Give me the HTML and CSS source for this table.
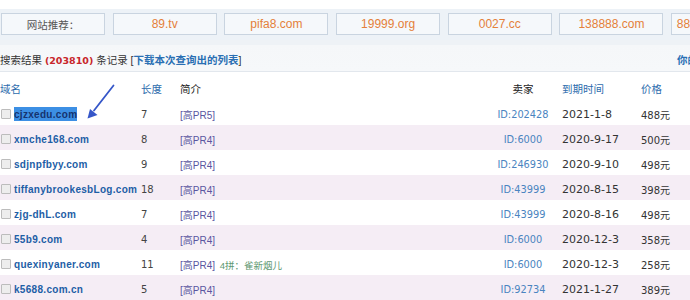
FILE: index.html
```html
<!DOCTYPE html>
<html lang="zh">
<head>
<meta charset="utf-8">
<title>域名搜索结果</title>
<link rel="stylesheet" href="styles.css">
</head>
<body>
<div class="page">
  <div class="rec">
    <div class="box label">网站推荐：</div>
    <div class="box">89.tv</div>
    <div class="box">pifa8.com</div>
    <div class="box">19999.org</div>
    <div class="box">0027.cc</div>
    <div class="box">138888.com</div>
    <div class="box">8888888888.com</div>
  </div>
  <div class="search">
    <div class="left">搜索结果 <b class="count">(203810)</b> 条记录 [<a class="dl">下载本次查询出的列表</a>]</div>
    <div class="right">你的</div>
  </div>
  <div class="table">
    <div class="row head">
      <div class="c-dom blue">域名</div>
      <div class="blue">长度</div>
      <div class="dark">简介</div>
      <div class="c-seller dark">卖家</div>
      <div class="blue">到期时间</div>
      <div class="blue">价格</div>
    </div>
    <div class="row">
      <div class="c-dom"><span class="cb"></span><a class="dom sel">cjzxedu.com</a></div>
      <div class="num">7</div>
      <div class="intro">[高PR5]</div>
      <div class="c-seller">ID:202428</div>
      <div class="date">2021-1-8</div>
      <div class="price">488元</div>
    </div>
    <div class="row alt">
      <div class="c-dom"><span class="cb"></span><a class="dom">xmche168.com</a></div>
      <div class="num">8</div>
      <div class="intro">[高PR4]</div>
      <div class="c-seller">ID:6000</div>
      <div class="date">2020-9-17</div>
      <div class="price">500元</div>
    </div>
    <div class="row">
      <div class="c-dom"><span class="cb"></span><a class="dom">sdjnpfbyy.com</a></div>
      <div class="num">9</div>
      <div class="intro">[高PR4]</div>
      <div class="c-seller">ID:246930</div>
      <div class="date">2020-9-10</div>
      <div class="price">498元</div>
    </div>
    <div class="row alt">
      <div class="c-dom"><span class="cb"></span><a class="dom">tiffanybrookesbLog.com</a></div>
      <div class="num">18</div>
      <div class="intro">[高PR4]</div>
      <div class="c-seller">ID:43999</div>
      <div class="date">2020-8-15</div>
      <div class="price">398元</div>
    </div>
    <div class="row">
      <div class="c-dom"><span class="cb"></span><a class="dom">zjg-dhL.com</a></div>
      <div class="num">7</div>
      <div class="intro">[高PR4]</div>
      <div class="c-seller">ID:43999</div>
      <div class="date">2020-8-16</div>
      <div class="price">498元</div>
    </div>
    <div class="row alt">
      <div class="c-dom"><span class="cb"></span><a class="dom">55b9.com</a></div>
      <div class="num">4</div>
      <div class="intro">[高PR4]</div>
      <div class="c-seller">ID:6000</div>
      <div class="date">2020-12-3</div>
      <div class="price">358元</div>
    </div>
    <div class="row">
      <div class="c-dom"><span class="cb"></span><a class="dom">quexinyaner.com</a></div>
      <div class="num">11</div>
      <div class="intro">[高PR4] <span class="note">4拼：雀新烟儿</span></div>
      <div class="c-seller">ID:6000</div>
      <div class="date">2020-12-3</div>
      <div class="price">258元</div>
    </div>
    <div class="row alt">
      <div class="c-dom"><span class="cb"></span><a class="dom">k5688.com.cn</a></div>
      <div class="num">5</div>
      <div class="intro">[高PR4]</div>
      <div class="c-seller">ID:92734</div>
      <div class="date">2021-1-27</div>
      <div class="price">389元</div>
    </div>
  </div>
  <svg class="arrow" width="40" height="40" viewBox="80 72 40 40" aria-hidden="true">
    <path d="M113.5 76.5 L94 101.5" stroke="#3556c8" stroke-width="1.8" fill="none" stroke-linecap="round"/>
    <path d="M87.5 109.5 L90 100 L97.5 106 Z" fill="#3556c8"/>
  </svg>
</div>
</body>
</html>
```

FILE: styles.css
```css
html, body {
  margin: 0;
  padding: 0;
  background: #ffffff;
}
body {
  width: 690px;
  height: 300px;
  overflow: hidden;
  font-family: "Liberation Sans", "Noto Sans CJK SC", sans-serif;
  font-size: 10px;
  color: #333333;
}
.page {
  position: relative;
  width: 690px;
}
.rec {
  margin-top: 9px;
  height: 31px;
  padding: 4px 0 0 1px;
  box-sizing: border-box;
  background: #edf2f7;
  display: flex;
  gap: 7.7px;
  white-space: nowrap;
  overflow: hidden;
}
.box {
  flex: 0 0 104px;
  height: 22px;
  box-sizing: border-box;
  border: 1px solid #c9d4e0;
  background: #f5f8fb;
  color: #e4803a;
  font-size: 12px;
  display: flex;
  align-items: center;
  justify-content: center;
  overflow: visible;
}
.box.label {
  color: #555555;
  font-size: 10.5px;
}
.search {
  height: 32px;
  background: linear-gradient(#eef2f6 0, #eef2f6 5px, #f5f7f9 5px, #f6f8fa 100%);
  border-bottom: 1px solid #e2e7ed;
  box-sizing: border-box;
  display: grid;
  grid-template-columns: 677px auto;
  align-items: center;
  padding-top: 8px;
  white-space: nowrap;
  font-size: 10.5px;
}
.count {
  color: #c8262b;
  font-family: "DejaVu Sans", sans-serif;
  font-size: 9.5px;
  font-weight: bold;
}
.dl, .right {
  color: #2a6fb3;
  font-weight: bold;
}
.row {
  display: grid;
  grid-template-columns: 141px 39px 304px 78px 79px 1fr;
  height: 25px;
  box-sizing: border-box;
  padding-top: 3px;
  align-items: center;
  white-space: nowrap;
}
.row.head {
  height: 28px;
  padding-top: 4px;
  font-size: 10.5px;
}
.row.alt {
  background: #f5edf5;
}
.blue { color: #2d6cad; }
.dark { color: #222222; }
.c-dom {
  display: flex;
  align-items: center;
}
.cb {
  width: 8px;
  height: 8px;
  border: 1px solid #bcbcbc;
  background: #ededed;
  border-radius: 1px;
  margin: 0 3px 0 1px;
}
.dom {
  color: #1d5ea6;
  font-weight: bold;
  font-size: 10px;
  letter-spacing: 0.3px;
}
.dom.sel {
  background: #3c8fe4;
  color: #16336e;
  padding: 2px 0 1px;
}
.num {
  font-family: "DejaVu Sans", sans-serif;
  font-size: 10px;
  color: #444444;
}
.intro {
  color: #5a56a0;
  font-size: 10px;
}
.note {
  color: #5e9870;
  font-size: 9.5px;
  margin-left: 2px;
}
.c-seller {
  text-align: center;
  font-family: "DejaVu Sans", sans-serif;
  font-size: 9.8px;
  color: #4a84c0;
}
.head .c-seller {
  font-family: "Liberation Sans", "Noto Sans CJK SC", sans-serif;
  font-size: 10.5px;
  color: #222222;
}
.date {
  font-family: "DejaVu Sans", sans-serif;
  font-size: 11px;
  color: #333333;
}
.price {
  font-family: "DejaVu Sans", "Noto Sans CJK SC", sans-serif;
  font-size: 10px;
  color: #333333;
}
.arrow {
  position: absolute;
  left: 80px;
  top: 72px;
  pointer-events: none;
}
```
